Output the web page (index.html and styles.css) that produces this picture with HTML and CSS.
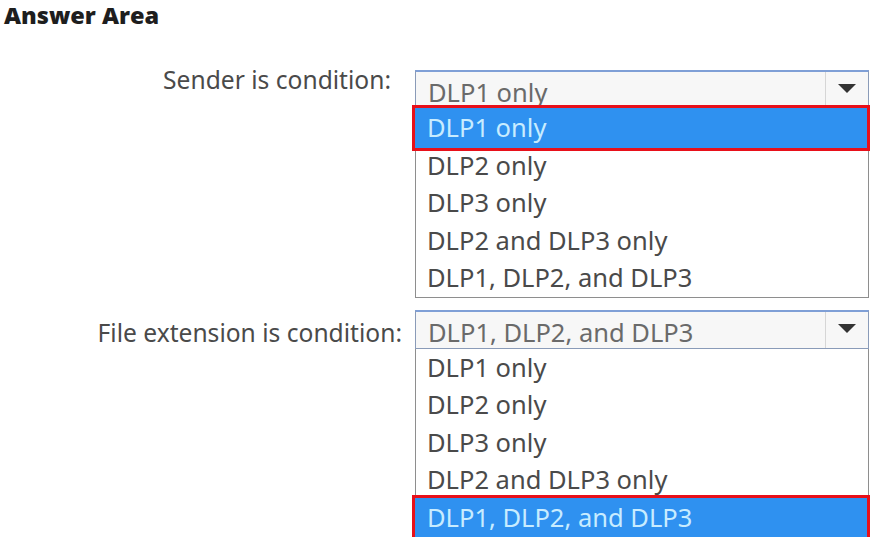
FILE: index.html
```html
<!DOCTYPE html>
<html lang="en">
<head>
  <meta charset="UTF-8">
  <title>Answer Area</title>
  <link rel="stylesheet" href="styles.css">
</head>
<body>

  <h2 class="title">Answer Area</h2>

  <div class="answer-grid">
    <!-- Sender -->
    <div class="label label-sender">Sender is condition:</div>
    <div class="dropdown">
      <div class="select">
        <span class="value">DLP1 only</span>
        <span class="arrow"><svg width="20" height="10" viewBox="0 0 20 10"><path d="M1 0 H19 L10 9 Z" fill="#333"/></svg></span>
      </div>
      <ul class="options">
        <li class="picked">DLP1 only</li>
        <li>DLP2 only</li>
        <li>DLP3 only</li>
        <li>DLP2 and DLP3 only</li>
        <li>DLP1, DLP2, and DLP3</li>
      </ul>
    </div>

    <!-- File extension -->
    <div class="label label-file">File extension is condition:</div>
    <div class="dropdown">
      <div class="select">
        <span class="value">DLP1, DLP2, and DLP3</span>
        <span class="arrow"><svg width="20" height="10" viewBox="0 0 20 10"><path d="M1 0 H19 L10 9 Z" fill="#333"/></svg></span>
      </div>
      <ul class="options">
        <li>DLP1 only</li>
        <li>DLP2 only</li>
        <li>DLP3 only</li>
        <li>DLP2 and DLP3 only</li>
        <li class="picked">DLP1, DLP2, and DLP3</li>
      </ul>
    </div>
  </div>

</body>
</html>
```

FILE: styles.css
```css
body {
  font-family: "Noto Sans", "Open Sans", sans-serif;
  background-color: #ffffff;
  color: #505050;
  margin: 0;
}
.title {
  font-family: "Open Sans", sans-serif;
  font-size: 23.5px;
  font-weight: 800;
  color: #1e1e1e;
  margin: 0;
  padding: 1px 0 0 4px;
  line-height: 28px;
}
.answer-grid {
  display: grid;
  grid-template-columns: 402px 454px;
  column-gap: 13px;
  row-gap: 12px;
  margin-top: 41px;
}
.label {
  text-align: right;
  font-size: 24.6px;
  color: #4a4a4a;
  line-height: 28px;
}
.label-sender {
  margin-top: -4px;
  padding-right: 11px;
}
.label-file {
  margin-top: 9px;
}
.dropdown {
  display: flex;
  flex-direction: column;
}
.select {
  display: flex;
  height: 36px;
  border: 1px solid #8a9bb8;
  border-top: 2px solid #7f9fd6;
  background: #f7f7f7;
  font-size: 25.5px;
  color: #6a6a6a;
}
.value {
  flex: 1;
  padding-left: 12px;
  line-height: 40px;
}
.arrow {
  display: flex;
  align-items: flex-start;
  justify-content: center;
  width: 42px;
  padding-top: 12px;
  border-left: 1px solid #d6d6d6;
}
.options {
  list-style: none;
  margin: 0;
  padding: 0;
  border: 1px solid #8e8e8e;
  border-top: none;
}
.options li {
  font-size: 25.5px;
  line-height: 37.5px;
  padding-left: 11px;
  color: #4a4a4a;
}
.options li.picked {
  background-color: #2f91f0;
  color: #c8ecff;
  box-shadow: 0 0 0 1px #2f91f0;
  outline: 3px solid #e8101a;
  outline-offset: 1px;
  margin-right: 2px;
}
```
